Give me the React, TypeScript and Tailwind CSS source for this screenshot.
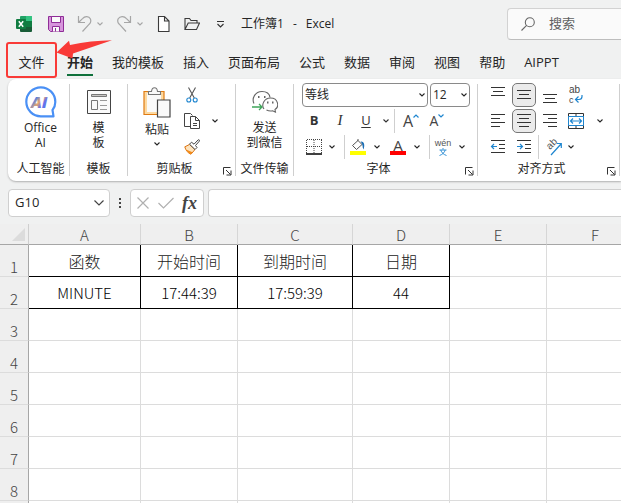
import type { ReactNode } from "react";
import clsx from "clsx";

const TABS = ["开始", "我的模板", "插入", "页面布局", "公式", "数据", "审阅", "视图", "帮助", "AIPPT"];

const COLUMNS = [
  { name: "A", width: 112 },
  { name: "B", width: 97 },
  { name: "C", width: 115 },
  { name: "D", width: 97 },
  { name: "E", width: 97 },
  { name: "F", width: 97 },
];

const ROWS = [
  ["函数", "开始时间", "到期时间", "日期"],
  ["MINUTE", "17:44:39", "17:59:39", "44"],
  [],
  [],
  [],
  [],
  [],
  [],
];

function Chevron({ className }: { className?: string }) {
  return (
    <svg viewBox="0 0 8 6" className={clsx("h-1.5 w-2 shrink-0", className)} fill="none" stroke="currentColor" strokeWidth="1.1">
      <path d="M1.5 1.5 4 4l2.5-2.5" />
    </svg>
  );
}

function IconButton({ label, children, className }: { label: string; children: ReactNode; className?: string }) {
  return (
    <button type="button" aria-label={label} className={clsx("flex shrink-0 items-center justify-center", className)}>
      {children}
    </button>
  );
}

function Divider() {
  return <div className="my-[5px] w-px shrink-0 bg-[#cfcfcf]" />;
}

function RibbonGroup({
  title,
  launcher,
  className,
  children,
}: {
  title: string;
  launcher?: boolean;
  className?: string;
  children: ReactNode;
}) {
  return (
    <section className={clsx("flex shrink-0 flex-col pt-1 pb-1", className)}>
      <div className="h-[76px]">{children}</div>
      <div className="flex h-[18px] items-center">
        <h2 className="flex-1 pt-0.5 text-center">{title}</h2>
        {launcher && (
          <IconButton label={`${title}设置`} className="mr-0.5 h-3 w-3 self-end">
            <svg viewBox="0 0 9 9" className="h-[9px] w-[9px]" fill="none" stroke="#333" strokeWidth="1">
              <path d="M.5 7.5v-7h7M3 3l4.5 4.5M8 3.5V8H3.5" />
            </svg>
          </IconButton>
        )}
      </div>
    </section>
  );
}

// 保存、撤消等快速访问按钮
function QuickAccess() {
  return (
    <div className="flex items-center gap-3">
      <svg viewBox="0 0 16 16" className="mr-1 h-4 w-4">
        <path fill="#21a366" d="M5 0h10a1 1 0 0 1 1 1v4H4V1a1 1 0 0 1 1-1z" />
        <path fill="#33c481" d="M10 0h5a1 1 0 0 1 1 1v4h-6z" />
        <path fill="#107c41" d="M4 5h12v5H4z" />
        <path fill="#185c37" d="M4 10h12v5a1 1 0 0 1-1 1H5a1 1 0 0 1-1-1z" />
        <path fill="#107c41" d="M10 10h6v1h-6z" />
        <rect y="3" width="10" height="10" rx="1" fill="#107c41" />
        <path stroke="#fff" strokeWidth="1.5" d="m2.8 5.2 4.4 5.6M7.2 5.2l-4.4 5.6" />
      </svg>
      <IconButton label="保存">
        <svg viewBox="0 0 16 16" className="h-4 w-4" fill="#d795dc" stroke="#8f2d97">
          <path d="M.5.5h15v15h-13l-2-2z" />
          <path fill="#fafafa" d="M3.5.5h9v6h-9zM4.5 15.5v-5h7v5" />
          <path d="M7.5 12v3.5" />
        </svg>
      </IconButton>
      <div className="flex items-center gap-1 text-[#a6a6a6]">
        <IconButton label="撤消">
          <svg viewBox="0 0 16 16" className="h-4 w-4" fill="none" stroke="currentColor" strokeWidth="1.2">
            <path d="M2.5 0v6.5H9M2.8 6.2 6.5 2.6C9-.2 13 0 14.3 2.8c1 2.2.4 4-1.1 5.4L6.5 15.5" />
          </svg>
        </IconButton>
        <IconButton label="撤消选项">
          <Chevron />
        </IconButton>
      </div>
      <div className="flex items-center gap-1 text-[#a6a6a6]">
        <IconButton label="恢复">
          <svg viewBox="0 0 16 16" className="h-4 w-4" fill="none" stroke="currentColor" strokeWidth="1.2">
            <path d="M14.5 0v6.5H8M14.2 6.2 10.5 2.6C8-.2 4 0 2.2 2.8c-1 2.2-.4 4 1.1 5.4L10 15.5" />
          </svg>
        </IconButton>
        <IconButton label="恢复选项">
          <Chevron />
        </IconButton>
      </div>
      <IconButton label="新建">
        <svg viewBox="0 0 16 16" className="h-4 w-4" fill="#fff" stroke="#3b3b3b" strokeWidth="1.1">
          <path d="M2.5.5h6l4.5 4.5v10.500H2.500zM8.500.5V5H13" />
        </svg>
      </IconButton>
      <IconButton label="打开">
        <svg viewBox="0 0 16 16" className="h-4 w-4" fill="none" stroke="#3b3b3b" strokeWidth="1.1">
          <path d="M1 13.5v-11h4.5L7 4.5h6V7M1 13.5 4.2 7h11.300l-3 6.5z" />
        </svg>
      </IconButton>
      <IconButton label="自定义快速访问工具栏">
        <svg viewBox="0 0 16 16" className="h-4 w-4" fill="none" stroke="#333" strokeWidth="1.1">
          <path d="M5 5.5h7M5.500 8l3 3 3-3" />
        </svg>
      </IconButton>
    </div>
  );
}

function TitleBar() {
  return (
    <header className="flex pt-2">
      <div className="flex h-8 w-[507px] shrink-0 items-center gap-[13px] pl-4">
        <QuickAccess />
        <h1 className="flex gap-[9px] text-xs">
          <span>工作簿1</span>
          <span>-</span>
          <span>Excel</span>
        </h1>
      </div>
      <label className="flex h-8 min-w-0 flex-1 items-center rounded-l border border-r-0 border-[#d2d2d2] border-b-[#bdbdbd] bg-[#fafafa] pl-[13px]">
        <svg viewBox="0 0 14 14" className="h-3.5 w-3.5 shrink-0" fill="none" stroke="#666" strokeWidth="1.1">
          <circle cx="8.800" cy="5.2" r="4.5" />
          <path d="M5.600 8.400.5 13.5" />
        </svg>
        <input
          type="search"
          aria-label="搜索"
          placeholder="搜索"
          className="ml-3.5 w-full min-w-0 bg-transparent text-[13px] outline-none placeholder:text-[#616161]"
        />
      </label>
    </header>
  );
}

function TabBar() {
  return (
    <nav className="flex pt-0.5 pb-px pl-1.5 text-[13px]">
      <div className="relative mr-2.5">
        <button type="button" className="h-9 w-[51px] rounded-[3px] border-2 border-[#f93a37] pt-1.5">
          文件
        </button>
        <svg viewBox="0 0 56 20" className="absolute -top-0.5 left-[50px] h-5 w-14" fill="#f93a37">
          <path d="M.5 12.5 13 .8 14 5C28 2 42 .5 56 .3L17 13.5l-.5 5z" />
        </svg>
      </div>
      <div className="flex flex-1 gap-[19px] overflow-hidden">
        {TABS.map((tab, i) => (
          <button
            key={tab}
            type="button"
            className={clsx("h-[34px] shrink-0 border-b-2 pt-2.5", i === 0 ? "border-[#0f703b] font-bold" : "border-transparent")}
          >
            {tab}
          </button>
        ))}
      </div>
    </nav>
  );
}

function Clipboard() {
  return (
    <RibbonGroup title="剪贴板" launcher className="w-[107px]">
      <div className="flex pl-1">
        <button type="button" className="flex w-[50px] flex-col items-center pt-1 leading-[15px]">
          <svg viewBox="0 0 28 31" className="mb-1 h-[31px] w-7" fill="none">
            <path fill="#fdd9a0" stroke="#e07b12" strokeWidth="1.2" d="M1 4.5h20v23H1z" />
            <path fill="#fafafa" d="M4 6h14v19H4z" />
            <path fill="#fafafa" stroke="#767676" strokeWidth="1.1" d="M5.5 7.5v-3h3c.5-5 5.5-5 6 0h3v3z" />
            <path fill="#fafafa" stroke="#444" strokeWidth="1.2" d="M14.5 13H27v17H14.500z" />
          </svg>
          粘贴
          <Chevron className="mt-1" />
        </button>
        <div className="flex w-5 flex-col gap-0.5">
          <IconButton label="剪切" className="h-6">
            <svg viewBox="0 0 12 16" className="h-4 w-3" fill="none" stroke="#555" strokeWidth="1.1">
              <path d="m2.5.5 5.800 10.500M9.500.5 3.700 11" />
              <circle cx="2.8" cy="13" r="2" stroke="#1f86d0" />
              <circle cx="9.2" cy="13" r="2" stroke="#1f86d0" />
            </svg>
          </IconButton>
          <IconButton label="复制" className="h-6">
            <svg viewBox="0 0 16 16" className="h-4 w-4 shrink-0" fill="#fff" stroke="#444">
              <path d="M6 13.5H.5V.5h6l2 2" />
              <path d="M6.500 3.500h5l4 4v8h-9zM11.500 3.500v4h4M9 10.500h4M9 12.500h4" />
            </svg>
          </IconButton>
          <IconButton label="格式刷" className="h-6">
            <svg viewBox="0 0 16 16" className="h-4 w-4 shrink-0" fill="none">
              <path fill="#fde3bd" stroke="#dd7410" d="M.8 7.800 5.500 5.500l5.500 5-4 4.700C4.500 14.500 1.500 11.500.8 7.800z" />
              <path fill="#f28c1c" d="m2 10.500 6.500 2.700-1.700 2C4.800 14.500 3 12.500 2 10.500z" />
              <path fill="#fff" stroke="#444" d="M5.500 5.200 7.500 3.200 10 5.200 14 1c1-.8 2 .3 1.300 1.200L11.500 6.500 13 8.500l-2 2z" />
            </svg>
          </IconButton>
        </div>
        <IconButton label="复制选项" className="ml-[9px] h-[76px]">
          <Chevron />
        </IconButton>
      </div>
    </RibbonGroup>
  );
}

function FontGroup() {
  return (
    <RibbonGroup title="字体" launcher className="w-[183px]">
      <div className="flex flex-col gap-0.5 pl-2">
        <div className="flex gap-0.5">
          <div className="relative h-6 w-[126px]">
            <select aria-label="字体" className="h-full w-full appearance-none rounded border border-[#8a8a8a] bg-white pl-0.5">
              <option>等线</option>
            </select>
            <Chevron className="pointer-events-none absolute top-[9px] right-0.5" />
          </div>
          <div className="relative h-6 w-10">
            <select aria-label="字号" className="h-full w-full appearance-none rounded border border-[#8a8a8a] bg-white pl-0.5">
              <option>12</option>
            </select>
            <Chevron className="pointer-events-none absolute top-[9px] right-0.5" />
          </div>
        </div>
        <div className="flex h-6 items-center text-[13px] text-[#333]">
          <button type="button" className="w-6 font-bold">B</button>
          <button type="button" className="w-7 font-['Liberation_Serif',serif] text-[15px] italic">I</button>
          <button type="button" className="w-6 underline underline-offset-2">U</button>
          <IconButton label="下划线选项" className="w-4">
            <Chevron />
          </IconButton>
          <div className="h-6 w-px bg-[#cfcfcf]" />
          <IconButton label="增大字号" className="w-8 text-base text-[#444]">
            A
            <svg viewBox="0 0 6 4" className="mb-2.5 h-1 w-1.5" fill="none" stroke="#1f86d0" strokeWidth="1.2">
              <path d="M.5 3.5 3 1l2.500 2.500" />
            </svg>
          </IconButton>
          <IconButton label="减小字号" className="w-5 text-sm text-[#444]">
            A
            <svg viewBox="0 0 6 4" className="mb-2.5 h-1 w-1.5" fill="none" stroke="#1f86d0" strokeWidth="1.2">
              <path d="M.5.5 3 3 5.500.5" />
            </svg>
          </IconButton>
        </div>
        <div className="flex h-6 items-center">
          <IconButton label="边框" className="w-6">
            <svg viewBox="0 0 16 16" className="h-4 w-4" fill="none" stroke="#444">
              <path strokeDasharray="1 1" d="M1 .5h15M.5 1v14M15.500 1v14M8 1v14M1 7.500h15" />
              <path stroke="#000" strokeWidth="1.5" d="M0 15h16" />
            </svg>
          </IconButton>
          <IconButton label="边框选项" className="mr-1.5 w-3">
            <Chevron />
          </IconButton>
          <div className="h-6 w-px bg-[#cfcfcf]" />
          <IconButton label="填充颜色" className="w-[26px]">
            <svg viewBox="0 0 16 16" className="h-4 w-4" fill="none">
              <path fill="#fff" stroke="#555" d="M2.500 6.500 8 1.500l4 4-5.500 5zM8 2V0" />
              <path fill="#1c6fb5" d="M10.500 2.500c4-.5 4.500 4 3 8C12 8 13.500 6 10.500 2.500z" />
              <path fill="#ff0" d="M0 12h16v4H0z" />
            </svg>
          </IconButton>
          <IconButton label="填充颜色选项" className="w-3">
            <Chevron />
          </IconButton>
          <IconButton label="字体颜色" className="w-[30px] flex-col">
            <span className="h-3 text-[15px] leading-3 text-[#444]">A</span>
            <span className="h-1 w-4 bg-[#f00]" />
          </IconButton>
          <IconButton label="字体颜色选项" className="mr-2 w-2">
            <Chevron />
          </IconButton>
          <div className="h-6 w-px bg-[#cfcfcf]" />
          <IconButton label="拼音指南" className="w-[26px] flex-col">
            <span className="font-['Liberation_Sans',sans-serif] text-[9px] leading-2 text-[#555]">wén</span>
            <svg viewBox="0 0 8 8" className="mt-px h-2 w-2" fill="none" stroke="#1f86d0" strokeWidth=".9">
              <path d="M4 0v1.500M.5 2h7M6.200 2C5.500 4.500 3.500 6.500.5 7.500M1.800 2c.7 2.500 2.700 4.500 5.700 5.500" />
            </svg>
          </IconButton>
          <IconButton label="拼音选项" className="w-3">
            <Chevron />
          </IconButton>
        </div>
      </div>
    </RibbonGroup>
  );
}

function Lines({ d }: { d: string }) {
  return (
    <svg viewBox="0 0 16 16" className="h-4 w-4" fill="none" stroke="#333">
      <path d={d} />
    </svg>
  );
}

function Alignment() {
  const active = "h-6 w-6 rounded-[5px] border border-[#777] bg-[#ebebeb]";
  return (
    <RibbonGroup title="对齐方式" launcher className="w-[141px]">
      <div className="flex flex-col gap-0.5 pl-2">
        <div className="flex h-6 gap-0.5">
          <IconButton label="顶端对齐" className="w-6">
            <Lines d="M1 .5h14M3 4.500h10M1 8.500h14" />
          </IconButton>
          <IconButton label="垂直居中" className={active}>
            <Lines d="M1 3.500h14M3 7.500h10M1 11.500h14" />
          </IconButton>
          <IconButton label="底端对齐" className="w-6">
            <Lines d="M1 7.500h14M3 11.500h10M1 15.500h14" />
          </IconButton>
          <IconButton label="自动换行" className="w-6">
            <svg viewBox="0 0 16 22" className="h-[22px] w-4 font-['Liberation_Sans',sans-serif]" fill="none">
              <text x="1" y="9" fontSize="10" fill="#444">ab</text>
              <text x="1" y="19" fontSize="9" fill="#444">c</text>
              <path stroke="#1f86d0" strokeWidth="1.2" d="M14 11v1.500c0 2.500-1.500 3-3 3H7.500M10.500 12.500l-3 3 3 3" />
            </svg>
          </IconButton>
        </div>
        <div className="flex h-6 gap-0.5">
          <IconButton label="左对齐" className="w-6">
            <Lines d="M1 1.500h14M1 5.500h9M1 9.500h14M1 13.500h9" />
          </IconButton>
          <IconButton label="居中" className={active}>
            <Lines d="M1 1.500h14M3 5.500h10M1 9.500h14M3 13.500h10" />
          </IconButton>
          <IconButton label="右对齐" className="w-6">
            <Lines d="M1 1.500h14M6 5.500h9M1 9.500h14M6 13.500h9" />
          </IconButton>
          <IconButton label="合并后居中" className="w-6">
            <svg viewBox="0 0 16 16" className="h-4 w-4" fill="none" stroke="#333">
              <path d="M.5.5h15v15H.5zM8 .5v3M8 12.500v3" />
              <path fill="#fff" stroke="#1f86d0" d="M.5 3.500h15v9H.5z" />
              <path stroke="#1f86d0" strokeWidth="1.2" d="M3 8h10M5 5.500 2.500 8 5 10.500M11 5.500 13.500 8 11 10.500" />
            </svg>
          </IconButton>
          <IconButton label="合并选项" className="w-5">
            <Chevron />
          </IconButton>
        </div>
        <div className="flex h-6 gap-0.5">
          <IconButton label="减少缩进量" className="w-6">
            <svg viewBox="0 0 16 16" className="h-4 w-4" fill="none" stroke="#333">
              <path d="M1 1.500h14M9 5.500h6M9 9.500h6M1 13.500h14" />
              <path stroke="#1f86d0" strokeWidth="1.2" d="M7 7.500H1.500M4 5 1.500 7.500 4 10" />
            </svg>
          </IconButton>
          <IconButton label="增加缩进量" className="w-6">
            <svg viewBox="0 0 16 16" className="h-4 w-4" fill="none" stroke="#333">
              <path d="M1 1.500h14M9 5.500h6M9 9.500h6M1 13.500h14" />
              <path stroke="#1f86d0" strokeWidth="1.2" d="M1 7.500h5.500M4 5l2.500 2.500L4 10" />
            </svg>
          </IconButton>
          <div className="w-px bg-[#cfcfcf]" />
          <IconButton label="方向" className="w-6">
            <svg viewBox="0 0 20 20" className="h-5 w-5 font-['Liberation_Sans',sans-serif]">
              <text fontSize="10" fill="#555" transform="translate(7 13) rotate(-45)">ab</text>
              <path fill="none" stroke="#1f86d0" strokeWidth="1.2" d="m8 18 10-11M14 6.500h4.300V11" />
            </svg>
          </IconButton>
          <IconButton label="方向选项" className="w-2">
            <Chevron />
          </IconButton>
        </div>
      </div>
    </RibbonGroup>
  );
}

function Ribbon() {
  return (
    <div className="ml-2 flex overflow-hidden rounded-l-lg bg-white text-xs shadow-[0_1px_2px_#b0b0b0]">
      <RibbonGroup title="人工智能" className="w-[61px] pl-1">
        <button type="button" className="flex w-full flex-col items-center pt-[3px] leading-[15px]">
          <svg viewBox="0 0 32 32" className="mb-0.5 h-8 w-8" fill="none">
            <defs>
              <linearGradient id="ai" x1="0" y1="0" x2="1" y2="1">
                <stop offset="0.3" stopColor="#3f7df0" />
                <stop offset="0.5" stopColor="#e9a56a" />
                <stop offset="0.65" stopColor="#6a72ea" />
                <stop offset="1" stopColor="#3f7df0" />
              </linearGradient>
            </defs>
            <path fill="#fff" stroke="#4a90f5" strokeWidth="2.2" strokeLinejoin="round" d="M28.500 30.300H16A14.500 14.500 0 1 1 30.300 16c0 3.500-.8 5.600-2.800 8z" />
            <text x="6" y="22" fontSize="16" fontWeight="800" fontStyle="italic" fill="url(#ai)">AI</text>
          </svg>
          <span>Office</span>
          <span>AI</span>
        </button>
      </RibbonGroup>
      <Divider />
      <RibbonGroup title="模板" className="w-[57px]">
        <button type="button" className="flex w-full flex-col items-center pt-[7px] leading-[15px]">
          <svg viewBox="0 0 24 24" className="mb-1.5 h-6 w-6" fill="#fafafa" stroke="#444">
            <path d="M.5.5h23v23H.5z" />
            <path fill="#c8c6c4" stroke="#777" d="M4.500 4.500h15v2h-15z" />
            <path stroke="#777" d="M4.500 10.500h6v9h-6z" />
            <path stroke="#999" d="M13 10.500h7M13 15.500h7M13 19.500h7" />
          </svg>
          <span>模</span>
          <span>板</span>
        </button>
      </RibbonGroup>
      <Divider />
      <Clipboard />
      <Divider />
      <RibbonGroup title="文件传输" className="w-[57px]">
        <button type="button" className="flex w-full flex-col items-center pt-[7px] leading-[15px]">
          <svg viewBox="0 0 26 24" className="mb-1.5 h-6 w-[26px]" fill="none" stroke="#666" strokeWidth="1.1">
            <path d="M2 13.500C-.5 8.500 3 1.500 10 1.500c4.500 0 7.500 2.500 8 6" />
            <path d="M12 19c-3-4 0-11 6.500-11 8 0 9 9 4.500 11.500l.5 2.500-3-1.200c-2 .4-4 .2-6-.8" />
            <path strokeWidth="1.8" d="M6 7h1.500M12 7h1.500M15 12.500h1.500M20 12.500h1.500" />
            <path stroke="#3fa55b" strokeWidth="1.3" d="M0 17h10M7 14l3 3-3 3" />
          </svg>
          <span>发送</span>
          <span>到微信</span>
        </button>
      </RibbonGroup>
      <Divider />
      <FontGroup />
      <Divider />
      <Alignment />
      <Divider />
    </div>
  );
}

function FormulaBar() {
  return (
    <div className="mt-2 mb-[7px] flex h-7 pl-2">
      <div className="flex w-[102px] items-center rounded border border-[#cfcfcf] bg-white pr-1">
        <input aria-label="名称框" defaultValue="G10" className="w-full min-w-0 bg-transparent pl-1.5 text-[13px] outline-none" />
        <IconButton label="名称框选项">
          <svg viewBox="0 0 12 8" className="h-2 w-3" fill="none" stroke="#444" strokeWidth="1.2">
            <path d="M1.500 1.500 6 6l4.500-4.500" />
          </svg>
        </IconButton>
      </div>
      <div className="flex w-5 flex-col items-center justify-center gap-0.5">
        <span className="h-0.5 w-0.5 bg-[#444]" />
        <span className="h-0.5 w-0.5 bg-[#444]" />
        <span className="h-0.5 w-0.5 bg-[#444]" />
      </div>
      <div className="mr-1 flex w-[74px] items-center justify-between rounded border border-[#cfcfcf] bg-white px-1.5">
        <IconButton label="取消">
          <svg viewBox="0 0 12 12" className="h-3 w-3" fill="none" stroke="#b0b0b0" strokeWidth="1.2">
            <path d="m.5.5 11 11M11.500.5l-11 11" />
          </svg>
        </IconButton>
        <IconButton label="输入">
          <svg viewBox="0 0 16 12" className="h-3 w-4" fill="none" stroke="#b0b0b0" strokeWidth="1.2">
            <path d="m.5 6 5 5 10-10" />
          </svg>
        </IconButton>
        <button
          type="button"
          aria-label="插入函数"
          className="font-['Liberation_Serif',serif] text-lg leading-4 font-bold text-[#444] italic"
        >
          fx
        </button>
      </div>
      <input aria-label="编辑栏" className="min-w-0 flex-1 rounded-l border border-r-0 border-[#cfcfcf] bg-white px-2 text-[13px] outline-none" />
    </div>
  );
}

function Sheet() {
  return (
    <div className="flex-1 overflow-hidden bg-white font-['Noto_Sans_CJK_SC',sans-serif] text-[15px] font-light">
      <table className="w-[644px] table-fixed border-separate border-spacing-0">
        <colgroup>
          <col className="w-[29px]" />
          {COLUMNS.map((col) => (
            <col key={col.name} style={{ width: col.width }} />
          ))}
        </colgroup>
        <thead>
          <tr className="h-[21px] bg-[#efefef] text-[#444]">
            <td className="border-r border-b border-r-[#cfcfcf] border-b-[#a6a6a6] p-0">
              <svg viewBox="0 0 13 13" className="mr-[3px] ml-auto h-[13px] w-[13px]" fill="#dcdcdc">
                <path d="M13 0v13H0z" />
              </svg>
            </td>
            {COLUMNS.map((col) => (
              <th
                key={col.name}
                scope="col"
                className="border-r border-b border-r-[#d6d6d6] border-b-[#a6a6a6] p-0 pt-0.5 leading-[18px] font-light"
              >
                {col.name}
              </th>
            ))}
          </tr>
        </thead>
        <tbody>
          {ROWS.map((row, r) => (
            <tr key={r} className="h-8">
              <th
                scope="row"
                className="border-r border-b border-r-[#a6a6a6] border-b-[#dcdcdc] bg-[#efefef] p-0 align-bottom leading-[18px] font-light text-[#444]"
              >
                {r + 1}
              </th>
              {COLUMNS.map((col, c) => (
                <td
                  key={col.name}
                  className={clsx(
                    "border-r border-b p-0 text-center leading-5",
                    r < 2 && c < 4 ? "border-black" : "border-[#dcdcdc]",
                    r === 0 ? "text-base text-[#222]" : "text-black",
                  )}
                >
                  {row[c]}
                </td>
              ))}
            </tr>
          ))}
          <tr className="h-8">
            <th className="border-r border-[#a6a6a6] bg-[#efefef]" />
            {COLUMNS.map((col) => (
              <td key={col.name} className="border-r border-[#dcdcdc]" />
            ))}
          </tr>
        </tbody>
      </table>
    </div>
  );
}

export default function App() {
  return (
    <div className="flex h-screen flex-col overflow-hidden bg-[#f0f1f1] font-['Open_Sans','Noto_Sans_CJK_SC',sans-serif] text-[#262626]">
      <TitleBar />
      <TabBar />
      <Ribbon />
      <FormulaBar />
      <Sheet />
    </div>
  );
}
